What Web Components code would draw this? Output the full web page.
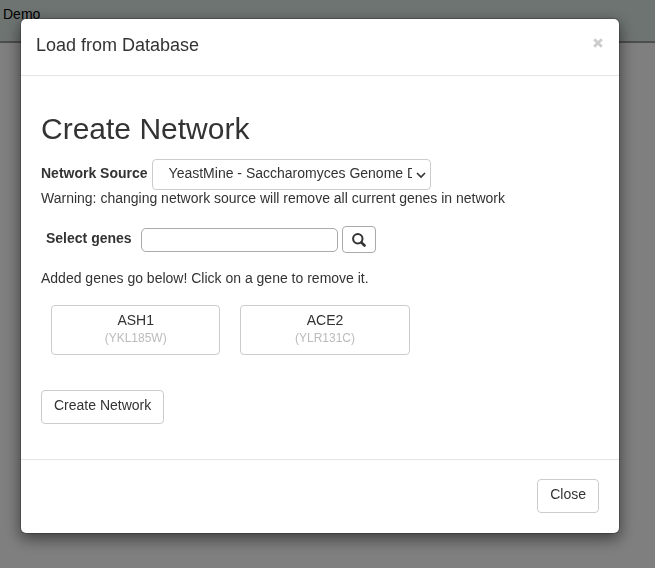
<!DOCTYPE html>
<html lang="en">
<head>
<meta charset="utf-8">
<title>Load from Database</title>
<style>
html, body { margin: 0; min-height: 100%; }
body { background: #fff; color: #333; font: 14px/20px "Liberation Sans", Arial, sans-serif; }
</style>
</head>
<body>
<demo-bar>Demo</demo-bar>
<modal-dialog heading="Load from Database">
  <network-form>
    <gene-card name="ASH1" code="YKL185W"></gene-card>
    <gene-card name="ACE2" code="YLR131C"></gene-card>
  </network-form>
  <action-button slot="footer">Close</action-button>
</modal-dialog>
<script>
function define(name, html, setup) {
  const t = document.createElement('template');
  t.innerHTML = html;
  customElements.define(name, class extends HTMLElement {
    connectedCallback() {
      if (this.shadowRoot) return;
      const root = this.attachShadow({ mode: 'open' });
      root.append(t.content.cloneNode(true));
      if (setup) setup(this, root);
    }
  });
}

define('demo-bar', `
<style>
:host { display: block; box-sizing: border-box; height: 43px; padding: 4px 3px; background: #dde9e4; border-bottom: 2px solid #9a9a9a; color: #000; }
</style><slot></slot>`);

define('action-button', `
<style>
:host { display: inline-block; }
button { display: block; font: inherit; color: inherit; background: #fff; border: 1px solid #ccc; border-radius: 4px; padding: 4px 12px 8px; cursor: pointer; }
</style><button type="button"><slot></slot></button>`);

define('gene-card', `
<style>
:host { display: block; }
button { display: block; width: 100%; font: inherit; color: inherit; background: #fff; border: 1px solid #ccc; border-radius: 4px; padding: 4px 12px 8px; cursor: pointer; }
span { display: block; }
.code { font-size: 12px; line-height: 16px; color: #bbb; }
</style><button type="button"><span class="name"></span><span class="code"></span></button>`,
(el, root) => {
  root.querySelector('.name').textContent = el.getAttribute('name');
  root.querySelector('.code').textContent = '(' + el.getAttribute('code') + ')';
});

define('network-form', `
<style>
:host { display: block; padding: 36px 20px 35px; }
h2 { margin: 0 0 13px; font-size: 30px; line-height: 34px; font-weight: 400; }
p { margin: 0; }
label { font-weight: 700; }
.source { display: flex; gap: 4px; }
.source label { padding-top: 4px; }
.pick { position: relative; display: flex; width: 279px; }
select { appearance: none; width: 100%; height: 31px; box-sizing: border-box; font: inherit; color: inherit; background: #fff; border: 1px solid #ccc; border-radius: 4px; padding: 0 18px 3px 16px; }
.pick svg { position: absolute; right: 5px; top: 13px; pointer-events: none; }
.warning { margin-top: -2px; }
.search { display: flex; align-items: center; gap: 4px; margin: 18px 0 15px; padding-left: 5px; }
.search label { padding: 0 5px 3px 0; }
input { width: 197px; height: 24px; box-sizing: border-box; font: inherit; background: #fff; border: 1px solid #aaa; border-radius: 5px; padding: 0 6px; }
.search button { width: 34px; height: 27px; box-sizing: border-box; display: grid; place-items: center; padding: 0; color: #333; background: #fff; border: 1px solid #aaa; border-radius: 4px; }
.genes { display: grid; grid-template-columns: repeat(3, minmax(0, 1fr)); gap: 20px; padding: 17px 0 35px 10px; }
</style>
<h2>Create Network</h2>
<div class="source">
  <label for="source">Network Source</label>
  <div class="pick">
    <select id="source"><option>YeastMine - Saccharomyces Genome Database</option></select>
    <svg width="10" height="7" viewBox="0 0 10 7" fill="none" stroke="#333" stroke-width="1.6" aria-hidden="true"><path d="M1 1l4 4 4-4"/></svg>
  </div>
</div>
<p class="warning">Warning: changing network source will remove all current genes in network</p>
<div class="search">
  <label for="genes">Select genes</label>
  <input id="genes" type="text">
  <button type="button" aria-label="Search"><svg width="14" height="14" viewBox="0 0 14 14" fill="none" stroke="currentColor"><circle cx="5.8" cy="5.8" r="4.7" stroke-width="2"/><path d="M9.3 9.3l3.2 3.2" stroke-width="2.6" stroke-linecap="round"/></svg></button>
</div>
<p>Added genes go below! Click on a gene to remove it.</p>
<div class="genes"><slot></slot></div>
<action-button>Create Network</action-button>`);

define('modal-dialog', `
<style>
:host { display: block; position: fixed; inset: 0; overflow: auto; background: rgba(0,0,0,.5); }
section { margin: 18px 35px 30px 20px; background: #fff; background-clip: padding-box; border: 1px solid rgba(0,0,0,.2); border-radius: 6px; box-shadow: 0 5px 15px rgba(0,0,0,.5); }
header { display: flex; justify-content: space-between; padding: 13px 15px 17px; border-bottom: 1px solid #e5e5e5; }
h1 { margin: 0; font-size: 18px; line-height: 26px; font-weight: 400; }
header button { display: grid; place-items: center; width: 12px; height: 22px; padding: 0; border: 0; background: none; color: #ccc; }
footer { display: flex; justify-content: flex-end; padding: 19px 20px 20px; border-top: 1px solid #e5e5e5; }
</style>
<section role="dialog" aria-labelledby="title">
  <header><h1 id="title"></h1><button type="button" aria-label="Close"><svg width="10" height="10" viewBox="0 0 10 10" fill="none" stroke="currentColor" stroke-width="2.8"><path d="M1.2 1.2l7.6 7.6M8.8 1.2L1.2 8.8"/></svg></button></header>
  <slot></slot>
  <footer><slot name="footer"></slot></footer>
</section>`,
(el, root) => { root.querySelector('h1').textContent = el.getAttribute('heading'); });
</script>
</body>
</html>
